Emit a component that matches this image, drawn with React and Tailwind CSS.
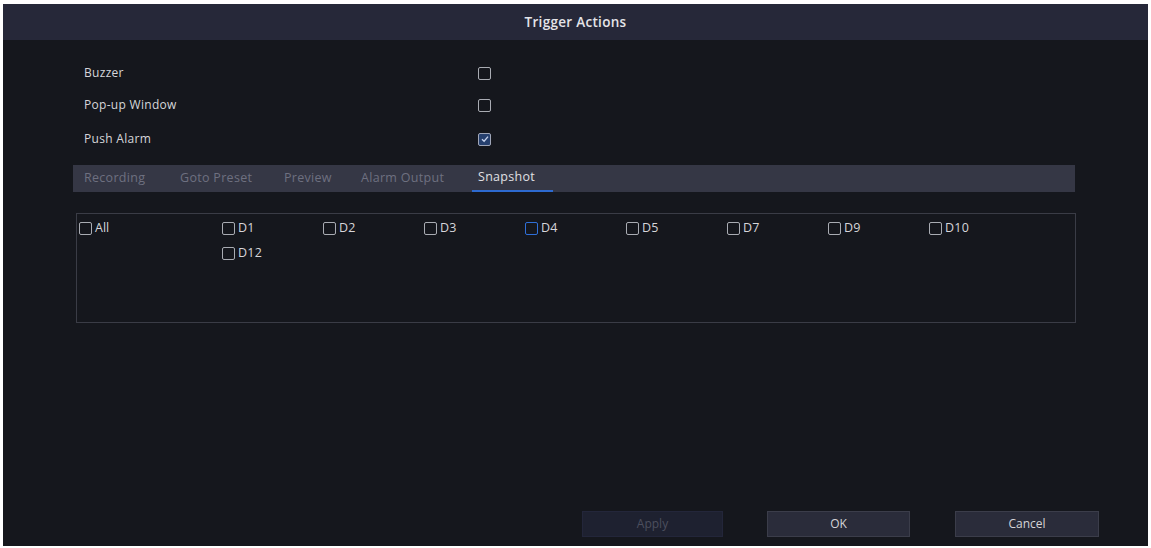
import React, { useState } from 'react';

const Box = ({ checked, active }) => (
  <span
    className={`inline-flex items-center justify-center w-[13px] h-[13px] rounded-[2px] border-[1.5px] ${
      active ? 'border-[#2f6fd8]' : checked ? 'border-[#9fa6b8] bg-[#26406e]' : 'border-[#a9acb3]'
    }`}
  >
    {checked && (
      <svg width="8" height="8" viewBox="0 0 8 8" fill="none">
        <path d="M1 4.2 L3.1 6.2 L7 1.6" stroke="#c8d4ee" strokeWidth="1.3" />
      </svg>
    )}
  </span>
);

const tabs = [
  { name: 'Recording', w: 'w-[96px]' },
  { name: 'Goto Preset', w: 'w-[104px]' },
  { name: 'Preview', w: 'w-[77px]' },
  { name: 'Alarm Output', w: 'w-[111px]' },
  { name: 'Snapshot', w: '' },
];
const channels = ['D1', 'D2', 'D3', 'D4', 'D5', 'D7', 'D9', 'D10', 'D12'];

export default function App() {
  const [tab] = useState('Snapshot');
  const rows = [
    { label: 'Buzzer', checked: false, h: 'h-[32px]' },
    { label: 'Pop-up Window', checked: false, h: 'h-[32px]' },
    { label: 'Push Alarm', checked: true, h: 'h-[36px]' },
  ];

  return (
    <div className="w-[1151px] h-[548px] bg-white pt-[4px] pl-[3px] pr-[3px] pb-[2px]" style={{ fontFamily: '"Open Sans", "Liberation Sans", sans-serif' }}>
      <div className="h-full flex flex-col bg-[#15171d]">
        {/* header */}
        <div className="h-[36px] shrink-0 bg-[#262839] flex items-center justify-center text-[13.5px] tracking-[0.3px] font-semibold text-[#e4e4e8]">
          Trigger Actions
        </div>

        <div className="flex-1 flex flex-col">
          <div className="pt-[17px] pl-[81px]">
            {rows.map((r) => (
              <div key={r.label} className={`flex items-center ${r.h}`}>
                <span className="w-[394px] text-[12px] tracking-[0.3px] text-[#d6d6da]">{r.label}</span>
                <Box checked={r.checked} />
              </div>
            ))}
          </div>

          {/* tabs */}
          <div className="mt-[8px] ml-[70px] w-[1002px] h-[27px] bg-[#353745] flex items-end pl-[11px]">
            {tabs.map((t) => (
              <div
                key={t.name}
                className={`h-full flex items-center text-[12.5px] tracking-[0.3px] ${t.w} ${
                  t.name === tab ? 'text-[#e0e0e4] border-b-2 border-[#2d6ad0] pl-[6px] pr-[18px]' : 'text-[#6e7080]'
                }`}
              >
                {t.name}
              </div>
            ))}
          </div>

          {/* channels */}
          <div className="mt-[21px] ml-[73px] w-[1000px] h-[110px] border border-[#3a3c46] flex pt-[3px] pl-[2px]">
            <div className="w-[143px] h-[22px] flex items-center gap-[3px] text-[12.5px] text-[#d6d6da]">
              <Box />
              <span>All</span>
            </div>
            <div className="grid grid-cols-[repeat(8,101px)] auto-rows-[25px]">
              {channels.map((c) => (
                <div key={c} className="h-[22px] flex items-center gap-[3px] text-[12.5px] tracking-[0.3px] text-[#d6d6da]">
                  <Box active={c === 'D4'} />
                  <span>{c}</span>
                </div>
              ))}
            </div>
          </div>

          {/* buttons */}
          <div className="mt-auto mb-[9px] flex justify-end pr-[49px] gap-[43px]">
            <button className="w-[141px] h-[26px] bg-[#1e2130] border border-[#23263a] text-[12px] text-[#4c4f5e]">Apply</button>
            <button className="w-[143px] h-[26px] bg-[#2a2c3a] border border-[#3b3d4a] text-[12px] text-[#d4d4d8] ml-[1px]">OK</button>
            <button className="w-[144px] h-[26px] bg-[#2a2c3a] border border-[#3b3d4a] text-[12px] text-[#d4d4d8] ml-[2px]">Cancel</button>
          </div>
        </div>
      </div>
    </div>
  );
}
